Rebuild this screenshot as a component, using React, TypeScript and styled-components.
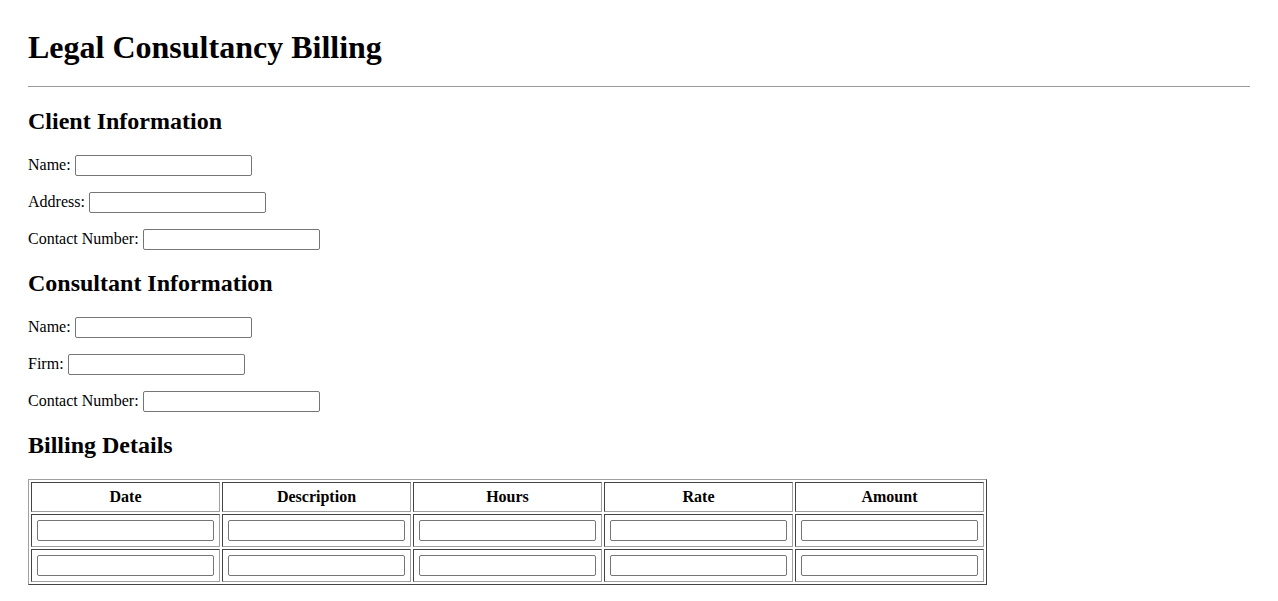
import styled, { createGlobalStyle } from "styled-components";

const GlobalStyle = createGlobalStyle`
  html, body {
    margin: 0;
    padding: 0;
    background: #ffffff;
  }
  body {
    font-family: "Liberation Serif", "Times New Roman", serif;
    font-size: 16px;
    color: #000000;
  }
`;

const Page = styled.div`
  padding: 29px 28px 20px;
`;

const Title = styled.h1`
  font-size: 32px;
  line-height: 37px;
  font-weight: bold;
  margin: 0 0 20px;
`;

const Divider = styled.hr`
  height: 0;
  margin: 0;
  border: none;
  border-top: 1px solid #9a9a9a;
`;

const SectionTitle = styled.h2<{ $first?: boolean }>`
  font-size: 24px;
  line-height: 28px;
  font-weight: bold;
  margin: ${(p) => (p.$first ? "20px" : "19px")} 0 20px;
`;

const FieldRow = styled.div`
  display: flex;
  align-items: center;
  height: 21px;
  margin-bottom: 16px;

  &:last-of-type {
    margin-bottom: 0;
  }
`;

const Label = styled.label`
  line-height: 18px;
  padding-bottom: 2px;
`;

const TextInput = styled.input`
  box-sizing: border-box;
  width: 177px;
  height: 21px;
  margin: 0 0 0 4px;
  padding: 1px 2px;
  border: 1px solid #767676;
  border-radius: 2px;
  background: #ffffff;
  font-family: inherit;
  font-size: 13px;
  outline: none;
`;

const Section = styled.section``;

const BillingTable = styled.table`
  border-collapse: separate;
  border-spacing: 2px;
  border: 1px solid;
  border-color: #a0a0a0 #444444 #444444 #a0a0a0;
`;

const HeadCell = styled.th`
  width: 177px;
  height: 18px;
  padding: 5px;
  border: 1px solid;
  border-color: #444444 #a0a0a0 #a0a0a0 #444444;
  font-weight: bold;
  font-size: 16px;
  line-height: 18px;
  text-align: center;
`;

const Cell = styled.td`
  width: 177px;
  height: 21px;
  padding: 5px;
  border: 1px solid;
  border-color: #444444 #a0a0a0 #a0a0a0 #444444;
  line-height: 0;
`;

const CellInput = styled(TextInput)`
  display: block;
  margin: 0;
`;

const columns = ["Date", "Description", "Hours", "Rate", "Amount"];

function Fields({ labels }: { labels: string[] }) {
  return (
    <Section>
      {labels.map((l) => (
        <FieldRow key={l}>
          <Label>{l}:</Label>
          <TextInput type="text" />
        </FieldRow>
      ))}
    </Section>
  );
}

export default function App() {
  return (
    <>
      <GlobalStyle />
      <Page>
        <Title>Legal Consultancy Billing</Title>
        <Divider />
        <SectionTitle $first>Client Information</SectionTitle>
        <Fields labels={["Name", "Address", "Contact Number"]} />
        <SectionTitle>Consultant Information</SectionTitle>
        <Fields labels={["Name", "Firm", "Contact Number"]} />
        <SectionTitle>Billing Details</SectionTitle>
        <BillingTable>
          <thead>
            <tr>
              {columns.map((c) => (
                <HeadCell key={c}>{c}</HeadCell>
              ))}
            </tr>
          </thead>
          <tbody>
            {[0, 1].map((r) => (
              <tr key={r}>
                {columns.map((c) => (
                  <Cell key={c}>
                    <CellInput type="text" />
                  </Cell>
                ))}
              </tr>
            ))}
          </tbody>
        </BillingTable>
      </Page>
    </>
  );
}
